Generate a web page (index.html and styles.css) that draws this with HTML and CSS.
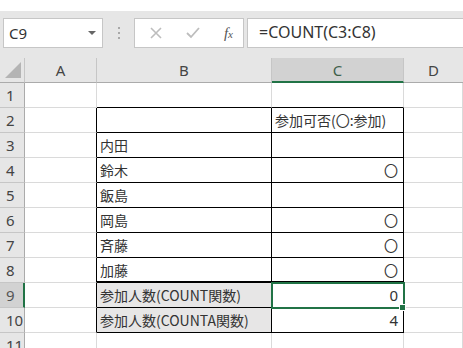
FILE: index.html
```html
<!DOCTYPE html>
<html lang="ja">
<head>
  <meta charset="UTF-8" />
  <title>Excel COUNT</title>
  <link rel="stylesheet" href="styles.css">
</head>
<body>
  <div class="topband"></div>

  <div class="toolbar">
    <div class="namebox">
      <span>C9</span>
      <span class="drop"></span>
    </div>
    <div class="grip"><i></i><i></i><i></i></div>
    <div class="fbtns">
      <svg width="14" height="14" viewBox="0 0 14 14"><path d="M2 2 L12 12 M12 2 L2 12" stroke="#bdbdbd" stroke-width="1.6" fill="none"/></svg>
      <svg width="16" height="14" viewBox="0 0 16 14"><path d="M2 7 L6 11 L14 2" stroke="#bdbdbd" stroke-width="1.8" fill="none"/></svg>
      <span class="fx">f<span>x</span></span>
    </div>
    <div class="formula">=COUNT(C3:C8)</div>
  </div>

  <div class="sheet">
    <div class="corner"><span></span></div>
    <div class="ch">A</div>
    <div class="ch">B</div>
    <div class="ch active">C</div>
    <div class="ch last">D</div>

    <div class="rh">1</div>
    <div class="cell"></div>
    <div class="cell tt"></div>
    <div class="cell tt"></div>
    <div class="cell"></div>

    <div class="rh">2</div>
    <div class="cell tl"></div>
    <div class="cell t"></div>
    <div class="cell t">参加可否(〇:参加)</div>
    <div class="cell"></div>

    <div class="rh">3</div>
    <div class="cell tl"></div>
    <div class="cell t">内田</div>
    <div class="cell t"></div>
    <div class="cell"></div>

    <div class="rh">4</div>
    <div class="cell tl"></div>
    <div class="cell t">鈴木</div>
    <div class="cell t r">〇</div>
    <div class="cell"></div>

    <div class="rh">5</div>
    <div class="cell tl"></div>
    <div class="cell t">飯島</div>
    <div class="cell t"></div>
    <div class="cell"></div>

    <div class="rh">6</div>
    <div class="cell tl"></div>
    <div class="cell t">岡島</div>
    <div class="cell t r">〇</div>
    <div class="cell"></div>

    <div class="rh">7</div>
    <div class="cell tl"></div>
    <div class="cell t">斉藤</div>
    <div class="cell t r">〇</div>
    <div class="cell"></div>

    <div class="rh">8</div>
    <div class="cell tl"></div>
    <div class="cell t thick">加藤</div>
    <div class="cell t thick r">〇</div>
    <div class="cell"></div>

    <div class="rh active">9</div>
    <div class="cell tl"></div>
    <div class="cell t sum">参加人数(COUNT関数)</div>
    <div class="cell t r num sel">0</div>
    <div class="cell"></div>

    <div class="rh">10</div>
    <div class="cell tl"></div>
    <div class="cell t sum">参加人数(COUNTA関数)</div>
    <div class="cell t r num">4</div>
    <div class="cell"></div>

    <div class="rh">11</div>
    <div class="cell"></div>
    <div class="cell"></div>
    <div class="cell"></div>
    <div class="cell"></div>
  </div>
</body>
</html>
```

FILE: styles.css
```css
body {
  margin: 0;
  width: 463px;
  height: 348px;
  overflow: hidden;
  background: #fff;
  font-family: "Noto Sans CJK JP", sans-serif;
  color: #333;
}

.topband {
  height: 11px;
  background: #fff;
}

.toolbar {
  height: 47px;
  box-sizing: border-box;
  padding: 7px 0 0 3px;
  background: #e6e6e6;
  display: flex;
  align-items: flex-start;
}

.namebox {
  width: 100px;
  height: 30px;
  box-sizing: border-box;
  background: #fff;
  border: 1px solid #c6c6c6;
  display: flex;
  align-items: center;
  justify-content: space-between;
  padding: 0 6px 0 5px;
  font-family: "Noto Sans", sans-serif;
  font-size: 15px;
  color: #333;
}

.drop {
  width: 0;
  height: 0;
  border-left: 4px solid transparent;
  border-right: 4px solid transparent;
  border-top: 4px solid #666;
}

.grip {
  width: 31px;
  display: flex;
  flex-direction: column;
  align-items: center;
  gap: 3px;
  padding-top: 9px;
}

.grip i {
  width: 2px;
  height: 2px;
  background: #a8a8a8;
}

.fbtns {
  width: 110px;
  height: 30px;
  box-sizing: border-box;
  background: #fff;
  border: 1px solid #c6c6c6;
  display: flex;
  align-items: center;
  justify-content: space-between;
  padding: 0 10px 0 14px;
}

.fx {
  font-family: "Liberation Serif", serif;
  font-style: italic;
  font-size: 15px;
  color: #555;
}

.fx span {
  font-size: 11px;
}

.formula {
  flex: 1;
  height: 30px;
  margin-left: 3px;
  box-sizing: border-box;
  background: #fff;
  border: 1px solid #c6c6c6;
  border-right: none;
  padding: 2px 0 0 11px;
  font-family: "Noto Sans", sans-serif;
  font-size: 16px;
  color: #333;
}

.sheet {
  display: grid;
  grid-template-columns: 25px 72px 175px 132px 1fr;
  grid-auto-rows: 25px;
}

.sheet > div {
  box-sizing: border-box;
}

.corner {
  background: #e6e6e6;
  border-right: 1px solid #c6c6c6;
  border-bottom: 1px solid #ababab;
  position: relative;
}

.corner span {
  position: absolute;
  right: 3px;
  bottom: 4px;
  width: 0;
  height: 0;
  border-left: 16px solid transparent;
  border-bottom: 16px solid #b4b4b4;
}

.ch {
  background: #e6e6e6;
  border-right: 1px solid #c6c6c6;
  border-bottom: 1px solid #ababab;
  text-align: center;
  font-family: "Noto Sans", sans-serif;
  font-size: 15px;
  line-height: 24px;
  color: #444;
}

.ch.active {
  background: #d2d2d2;
  border-bottom: 2px solid #217346;
  color: #3f5f4a;
}

.ch.last {
  border-right: none;
}

.rh {
  background: #e6e6e6;
  border-right: 1px solid #ababab;
  border-bottom: 1px solid #c6c6c6;
  font-family: "Noto Sans", sans-serif;
  font-size: 15px;
  line-height: 24px;
  padding-left: 6px;
  color: #444;
}

.rh.active {
  background: #d2d2d2;
  border-right: 2px solid #217346;
  color: #555;
}

.cell {
  border-right: 1px solid #dadada;
  border-bottom: 1px solid #dadada;
  font-size: 14px;
  line-height: 24px;
  padding: 0 3px;
  white-space: nowrap;
}

.cell.tt {
  border-bottom-color: #000;
}

.cell.tl {
  border-right-color: #000;
}

.cell.t {
  border-right-color: #000;
  border-bottom-color: #000;
}

.cell.thick {
  border-bottom-width: 2px;
}

.cell.sum {
  background: #e7e6e6;
}

.cell.r {
  text-align: right;
  padding-right: 5px;
}

.cell.num {
  font-family: "Noto Sans", sans-serif;
  font-size: 15px;
}

.cell.sel {
  position: relative;
  outline: 2px solid #217346;
  outline-offset: -1px;
}

.cell.sel::after {
  content: "";
  position: absolute;
  right: -3px;
  bottom: -4px;
  width: 5px;
  height: 5px;
  background: #217346;
  border: 1px solid #fff;
}
```
